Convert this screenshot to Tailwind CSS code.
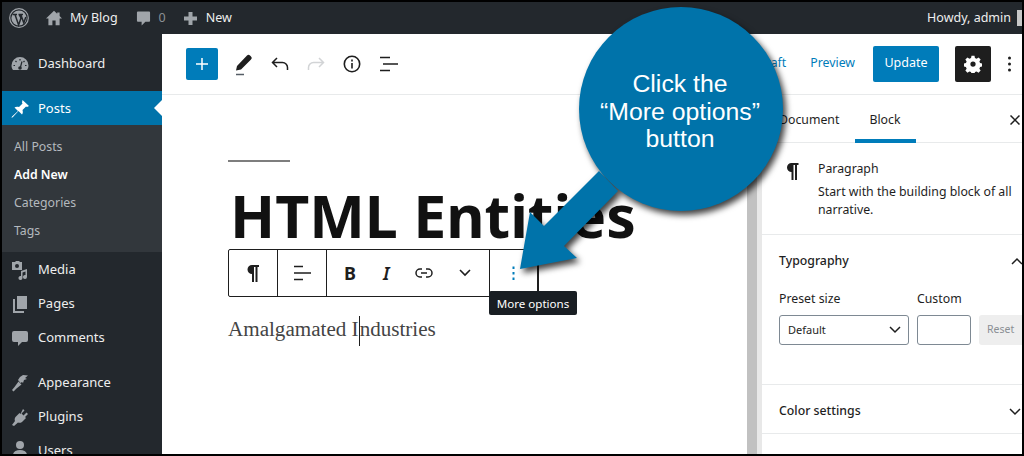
<!DOCTYPE html>
<html><head><meta charset="utf-8"><script src="https://cdn.jsdelivr.net/npm/@tailwindcss/browser@4"></script></head>
<body class="bg-black">
<div class="relative w-[1024px] h-[456px] border-2 border-black overflow-hidden bg-white flex flex-col font-['Noto_Sans',sans-serif] text-[#1e1e1e]">
  <!-- admin bar -->
  <header class="h-[32px] shrink-0 bg-[#23282d] flex items-center text-[#eeeeee] text-[12.500px]">
    <svg class="ml-[7px] w-[20px] h-[20px]" viewBox="0 0 20 20" fill="none"><circle cx="10" cy="10" r="9.300" stroke="#a0a5aa" stroke-width="1.200"/><circle cx="10" cy="10" r="7.600" fill="#a0a5aa"/><path d="M3.500 6.500H8M6 6.500l3.600 10.500L12 10 10 6.500M9.500 6.500h4.500M11.800 6.500l3 8.500 2-6" stroke="#23282d" stroke-width="1.500"/></svg>
    <svg class="ml-[17px] w-[16px] h-[16px]" viewBox="0 0 20 20" fill="#a0a5aa"><path d="M10 1 0 10.500h3V19h5v-6h4v6h5v-8.500h3l-3-3V3h-3v1.700z"/></svg>
    <span class="ml-[8px]">My Blog</span>
    <svg class="ml-[18px] w-[15px] h-[18px]" viewBox="0 0 16 18" fill="#a0a5aa"><path d="M2 2h12a1 1 0 0 1 1 1v9a1 1 0 0 1-1 1h-4l-4 4v-4H2a1 1 0 0 1-1-1V3a1 1 0 0 1 1-1z"/></svg>
    <span class="ml-[8px] text-[#8c9095]">0</span>
    <svg class="ml-[17px] w-[15px] h-[15px]" viewBox="0 0 15 15" fill="#a0a5aa"><path d="M5.500 1h4v4.500H14v4H9.500V14h-4V9.500H1v-4h4.500z"/></svg>
    <span class="ml-[8px]">New</span>
    <span class="ml-auto">Howdy, admin</span>
    <span class="ml-[6px] w-[5px] h-[16px] bg-[#c8c8c8]"></span>
  </header>
  <div class="flex flex-1 min-h-0">
    <!-- admin menu -->
    <aside class="w-[160px] shrink-0 bg-[#23282d] text-[#eeeeee] text-[13px] pt-[12px]">
      <div class="h-[34px] flex items-center pt-[2px] pl-[8px] gap-[8px]"><svg class="w-[20px] h-[20px]" viewBox="0 0 20 20"><path d="M10 3a8.500 8.500 0 0 0-8.500 8.500c0 1.800.6 3.300 1.500 4.500h14c.9-1.200 1.500-2.700 1.500-4.500A8.500 8.500 0 0 0 10 3z" fill="#a0a5aa"/><path d="M10 5v1.500M5.500 7l1 1M14.500 7l-1 1M3.500 11.500H5M15 11.500h1.500M12 7.500 10.500 13" stroke="#23282d" stroke-width="1.200" fill="none"/><circle cx="10" cy="14" r="1.800" fill="#23282d"/></svg><span>Dashboard</span></div>
      <div class="relative mt-[11px] h-[34px] bg-[#0073aa] text-white flex items-center pt-[2px] pl-[8px] gap-[8px]"><svg class="w-[20px] h-[20px]" viewBox="0 0 20 20" fill="#ffffff"><path d="M12.500 1l6.500 6-2 1-1-.5-3.500 3.500c.7 2 .2 3.500-.5 4.500L8.500 12 3 18l-1.500 1L2 17.500 8 12 4.500 8.500c1-.7 2.500-1.200 4.500-.5L12.500 4.500 12 3.500z"/></svg><span>Posts</span><span class="absolute right-0 top-[9px] w-0 h-0 border-y-[8px] border-y-transparent border-r-[8px] border-r-white"></span></div>
      <div class="h-[127px] bg-[#32373c] text-[12.300px] text-[#b4b9be] pt-[8px] pl-[12px]">
        <div class="h-[28px] flex items-center">All Posts</div>
        <div class="h-[28px] flex items-center font-semibold text-white">Add New</div>
        <div class="h-[28px] flex items-center">Categories</div>
        <div class="h-[28px] flex items-center">Tags</div>
      </div>
      <div class="h-[34px] flex items-center pt-[2px] pl-[8px] gap-[8px]"><svg class="w-[20px] h-[20px]" viewBox="0 0 20 20" fill="#a0a5aa"><path d="M2 2h3l1-1h3l1 1h2v8H2z"/><circle cx="7" cy="6" r="2" fill="#23282d"/><path d="M11 11l6-2v8a2 2 0 1 1-1.500-2V11.500l-3 1V18a2 2 0 1 1-1.500-2z"/></svg><span>Media</span></div>
      <div class="h-[34px] flex items-center pt-[2px] pl-[8px] gap-[8px]"><svg class="w-[20px] h-[20px]" viewBox="0 0 20 20" fill="#a0a5aa"><path d="M7 2h10v13H7z"/><path d="M3 5h2v12h9v2H3z"/></svg><span>Pages</span></div>
      <div class="h-[34px] flex items-center pt-[2px] pl-[8px] gap-[8px]"><svg class="w-[20px] h-[20px]" viewBox="0 0 20 20" fill="#a0a5aa"><path d="M4 3h12a2 2 0 0 1 2 2v7a2 2 0 0 1-2 2h-4l-4 4v-4H4a2 2 0 0 1-2-2V5a2 2 0 0 1 2-2z"/></svg><span>Comments</span></div>
      <div class="mt-[11px] h-[34px] flex items-center pt-[2px] pl-[8px] gap-[8px]"><svg class="w-[20px] h-[20px]" viewBox="0 0 20 20" fill="#a0a5aa"><path d="M10 4l3-2 5 .5-3 2.500 2 1-3 1-1 3-1-1-1.500 1L8 7zM8.500 8.500l3 3-5 4-3 3-1.500-1.500 2.500-3z"/></svg><span>Appearance</span></div>
      <div class="h-[34px] flex items-center pt-[2px] pl-[8px] gap-[8px]"><svg class="w-[20px] h-[20px]" viewBox="0 0 20 20" fill="#a0a5aa"><path d="M13 2l1.500 1.500-3 3 2 2 3-3L18 7l-3 3 1 1-4 4c-1.500 1-3 1-4 .5L4 19l-2-1 3-4c-.5-1-.5-2.500.5-4l4-4 1 1z"/></svg><span>Plugins</span></div>
      <div class="h-[34px] flex pt-[7px] pl-[8px] gap-[8px]"><svg class="w-[20px] h-[20px]" viewBox="0 0 20 20" fill="#a0a5aa"><circle cx="10" cy="5" r="4"/><path d="M3 15c0-3 3-5 7-5s7 2 7 5v5H3z"/></svg><span class="mt-[1px] leading-[18px]">Users</span></div>
    </aside>
    <!-- editor -->
    <main class="flex-1 min-w-0 flex flex-col">
      <div class="h-[61px] shrink-0 border-b border-[#e8eaeb] flex items-center pl-[24px] pr-[4px] pb-[1px]">
        <div class="w-[32px] h-[32px] bg-[#007cba] rounded-[2px] flex items-center justify-center"><svg class="w-[16px] h-[16px]" viewBox="0 0 16 16" stroke="#fff" stroke-width="1.500"><path d="M8 2v12M2 8h12"/></svg></div>
        <svg class="ml-[16px] w-[20px] h-[24px]" viewBox="0 0 20 24"><path d="M3 14 13 3.500a2 2 0 0 1 3 0l1 1a2 2 0 0 1 0 3L7 17.500l-5 1z" fill="#1e1e1e"/><path d="M2 22.500h8" stroke="#555d66" stroke-width="1.500"/></svg>
        <svg class="ml-[16px] w-[20px] h-[20px]" viewBox="0 0 20 20" fill="none" stroke="#1e1e1e" stroke-width="1.500"><path d="M7 4 2.500 8.500 7 13M3 8.500h9.500a5 5 0 0 1 5 5V16"/></svg>
        <svg class="ml-[16px] w-[20px] h-[20px]" viewBox="0 0 20 20" fill="none" stroke="#d2d4d6" stroke-width="1.500"><path d="M13 4l4.500 4.500L13 13M17 8.500H7.500a5 5 0 0 0-5 5V16"/></svg>
        <svg class="ml-[16px] w-[20px] h-[20px]" viewBox="0 0 20 20" fill="none" stroke="#1e1e1e" stroke-width="1.600"><circle cx="10" cy="10" r="7.700"/><path d="M10 9v5.500M10 5.500v2"/></svg>
        <svg class="ml-[17px] w-[20px] h-[20px]" viewBox="0 0 20 20" fill="none" stroke="#1e1e1e" stroke-width="1.600"><path d="M1 3.500h10M4 10h15M1 16.500h10"/></svg>
        <div class="ml-auto flex items-center">
          <span class="text-[12.300px] text-[#007cba] mr-[24px]">Save draft</span>
          <span class="text-[12.300px] text-[#007cba] mr-[18px]">Preview</span>
          <div class="w-[66px] h-[36px] bg-[#007cba] rounded-[2px] text-white text-[12.500px] flex items-center justify-center">Update</div>
          <div class="ml-[16px] w-[36px] h-[36px] bg-[#1e1e1e] rounded-[2px] flex items-center justify-center"><svg class="w-[18px] h-[18px]" viewBox="0 0 24 24" fill="#fff"><path fill-rule="evenodd" d="M10 1h4l.6 3 2.200.9 2.600-1.700 2.800 2.800-1.700 2.600.9 2.200 3 .6v4l-3 .6-.9 2.200 1.700 2.600-2.800 2.800-2.600-1.700-2.200.9-.6 3h-4l-.6-3-2.200-.9-2.600 1.700-2.800-2.800 1.700-2.600-.9-2.200-3-.6v-4l3-.6.9-2.200-1.700-2.600 2.800-2.800 2.600 1.700 2.200-.9zM12 8.500a3.500 3.500 0 1 0 0 7 3.500 3.500 0 0 0 0-7z"/></svg></div>
          <svg class="ml-[17px] w-[3px] h-[16px]" viewBox="0 0 3 16" fill="#1e1e1e"><circle cx="1.500" cy="2" r="1.500"/><circle cx="1.500" cy="8" r="1.500"/><circle cx="1.500" cy="14" r="1.500"/></svg>
          <span class="w-[7px]"></span>
        </div>
      </div>
      <div class="flex-1 min-h-0 flex">
        <div class="flex-1 min-w-0 pl-[66px] pt-[65px]">
          <div class="w-[62px] h-[2px] bg-[#7e7e7e]"></div>
          <h1 class="mt-[19px] ml-[2px] text-[59px] leading-[68px] font-bold text-[#111111] whitespace-nowrap">HTML Entities</h1>
          <div class="relative mt-0 w-[311px] h-[48px] border border-[#1e1e1e] rounded-[2px] flex items-center bg-white">
            <div class="w-[49px] h-full border-r border-[#1e1e1e] flex items-center justify-center"><svg class="w-[12px] h-[17px]" viewBox="0 0 12 17" fill="#1e1e1e"><path d="M5 0h7v2h-1.500v15H8.500V2H7v15H5V9a4.500 4.500 0 0 1 0-9z"/></svg></div>
            <div class="w-[49px] h-full border-r border-[#1e1e1e] flex items-center justify-center"><svg class="w-[18px] h-[16px]" viewBox="0 0 18 16" stroke="#1e1e1e" stroke-width="1.600"><path d="M1 1.500h9M1 8h17M1 14.500h9"/></svg></div>
            <div class="w-[163px] h-full border-r border-[#1e1e1e] flex items-center relative">
              <span class="ml-[17px] w-[13px] text-[18px] font-bold font-['Noto_Sans',sans-serif]">B</span>
              <span class="ml-[26px] w-[8px] text-[18px] italic font-semibold font-['Noto_Sans',sans-serif]">I</span>
              <svg class="ml-[24px] w-[18px] h-[10px]" viewBox="0 0 18 10" fill="none" stroke="#1e1e1e" stroke-width="1.500"><path d="M7 1H5a4 4 0 0 0 0 8h2M11 1h2a4 4 0 0 1 0 8h-2M6 5h6"/></svg>
              <svg class="ml-[26px] w-[12px] h-[8px]" viewBox="0 0 12 8" fill="none" stroke="#1e1e1e" stroke-width="1.600"><path d="M1 1l5 5 5-5"/></svg>
            </div>
            <div class="flex-1 h-full border-r border-[#1e1e1e] flex items-center justify-center"><svg class="w-[3px] h-[15px]" viewBox="0 0 3 15" fill="#007cba"><rect width="2" height="2.500" x=".5" y=".5"/><rect width="2" height="2.500" x=".5" y="6"/><rect width="2" height="2.500" x=".5" y="11.500"/></svg></div>
            <div class="absolute left-[260px] top-[41px] w-[88px] h-[24px] rounded-[2px] bg-[#191e23] text-white text-[11.600px] flex items-center justify-center whitespace-nowrap pt-[1px]">More options</div>
          </div>
          <div class="relative mt-[18px] font-['Liberation_Serif',serif] text-[21.100px] leading-[28px] text-[#444444]">Amalgamated I<span class="inline-block w-0 h-[30px] align-middle border-l border-[#1e1e1e]"></span>ndustries</div>
        </div>
        <div class="w-[15px] shrink-0 flex"><div class="w-[10px] bg-[#c1c1c1]"></div><div class="w-[5px] bg-[#e8e8e8]"></div></div>
        <!-- settings -->
        <aside class="w-[260px] shrink-0 text-[12.300px]">
          <div class="h-[48px] border-b border-[#e8eaeb] flex items-center pl-[17px] pt-[3px] relative">
            <span>Document</span><span class="ml-[30px]">Block</span>
            <span class="absolute left-[93px] bottom-[-1px] w-[61px] h-[4px] bg-[#007cba]"></span>
            <svg class="ml-auto mr-[2px] w-[10px] h-[10px]" viewBox="0 0 10 10" stroke="#1e1e1e" stroke-width="1.500"><path d="M.5.5l9 9M9.500.5l-9 9"/></svg>
          </div>
          <div class="h-[92px] border-b border-[#e8eaeb] flex pl-[24px] pt-[17px]">
            <svg class="mt-[3px] w-[13px] h-[17px] shrink-0" viewBox="0 0 12 17" fill="#1e1e1e"><path d="M5 0h7v2h-1.500v15H8.500V2H7v15H5V9a4.500 4.500 0 0 1 0-9z"/></svg>
            <div class="ml-[19px] leading-[18px] text-[#1e1e1e]"><div>Paragraph</div><div class="mt-[5px] w-[200px]">Start with the building block of all narrative.</div></div>
          </div>
          <div class="h-[150px] border-b border-[#e8eaeb] pl-[17px] pt-[16px]">
            <div class="flex items-center h-[20px]"><span class="font-medium">Typography</span><svg class="ml-auto mr-[-1px] w-[12px] h-[8px]" viewBox="0 0 12 8" fill="none" stroke="#1e1e1e" stroke-width="1.500"><path d="M1 7l5-5 5 5"/></svg></div>
            <div class="flex mt-[19px] leading-[18px]"><span class="w-[138px]">Preset size</span><span>Custom</span></div>
            <div class="flex mt-[7px]">
              <div class="w-[130px] h-[30px] border border-[#7e8993] rounded-[3px] flex items-center pl-[8px] text-[11px]">Default<svg class="ml-auto mr-[7px] w-[12px] h-[8px]" viewBox="0 0 12 8" fill="none" stroke="#1e1e1e" stroke-width="1.500"><path d="M1 1l5 5 5-5"/></svg></div>
              <div class="ml-[8px] w-[54px] h-[30px] border border-[#7e8993] rounded-[3px]"></div>
              <div class="ml-[8px] flex-1 h-[30px] bg-[#eeeeee] rounded-l-[3px] text-[10.500px] text-[#8a8f94] flex items-center pl-[8px]">Reset</div>
            </div>
          </div>
          <div class="h-[49px] border-b border-[#e8eaeb] pl-[17px] pt-[5px] flex items-center"><span class="font-medium">Color settings</span><svg class="ml-auto mr-[1px] w-[12px] h-[8px]" viewBox="0 0 12 8" fill="none" stroke="#1e1e1e" stroke-width="1.500"><path d="M1 1l5 5 5-5"/></svg></div>
        </aside>
      </div>
    </main>
  </div>
  <!-- callout -->
  <svg class="absolute left-[-2px] top-[-2px] w-[1024px] h-[456px]" viewBox="0 0 1024 456" style="filter:drop-shadow(3px 4px 3px rgba(0,0,0,.75))">
    <path d="M599 171 544 226 530 212 520 269 577 258 564 246 618 191z" fill="#0073aa"/>
    <circle cx="681" cy="109" r="102" fill="#0073aa"/>
  </svg>
  <div class="absolute left-[578px] top-[68px] w-[200px] text-center text-white font-['Liberation_Sans',sans-serif] text-[24.800px] leading-[27.500px]">Click the<br>“More options”<br>button</div>
</div>
</body></html>
